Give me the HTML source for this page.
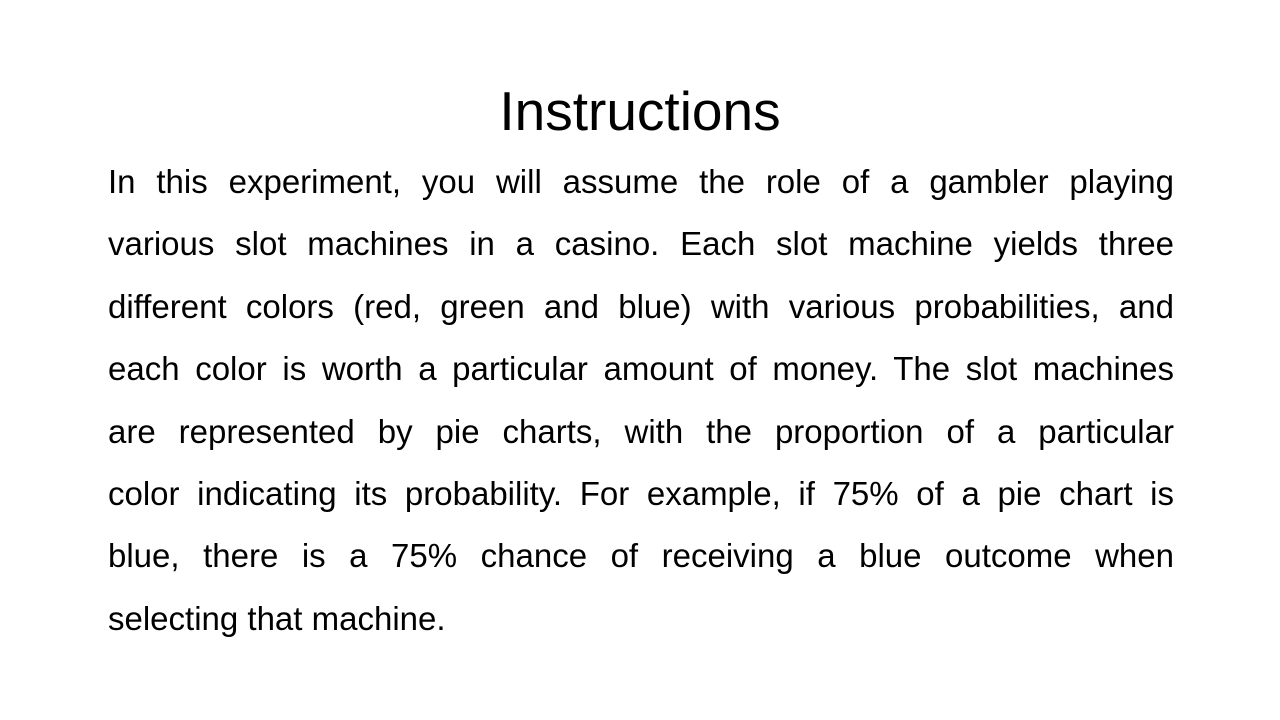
<!DOCTYPE html>
<html><head><meta charset="utf-8"><style>
html,body{margin:0;padding:0;background:#fff;}
body{width:1280px;height:720px;position:relative;overflow:hidden;font-family:"Liberation Sans",sans-serif;color:#000;}
h1{position:absolute;top:78px;left:0;width:1280px;text-align:center;margin:0;font-weight:normal;font-size:55px;line-height:66px;}
.t{position:absolute;left:108px;width:1066px;top:151px;font-size:33px;}
.l{height:62.4px;line-height:62px;white-space:nowrap;text-align:justify;text-align-last:justify;}
.l.last{text-align-last:left;}
</style></head><body>
<h1>Instructions</h1>
<div class="t">
<div class="l">In this experiment, you will assume the role of a gambler playing</div>
<div class="l">various slot machines in a casino. Each slot machine yields three</div>
<div class="l">different colors (red, green and blue) with various probabilities, and</div>
<div class="l">each color is worth a particular amount of money. The slot machines</div>
<div class="l">are represented by pie charts, with the proportion of a particular</div>
<div class="l">color indicating its probability. For example, if 75% of a pie chart is</div>
<div class="l">blue, there is a 75% chance of receiving a blue outcome when</div>
<div class="l last">selecting that machine.</div>
</div>
</body></html>
